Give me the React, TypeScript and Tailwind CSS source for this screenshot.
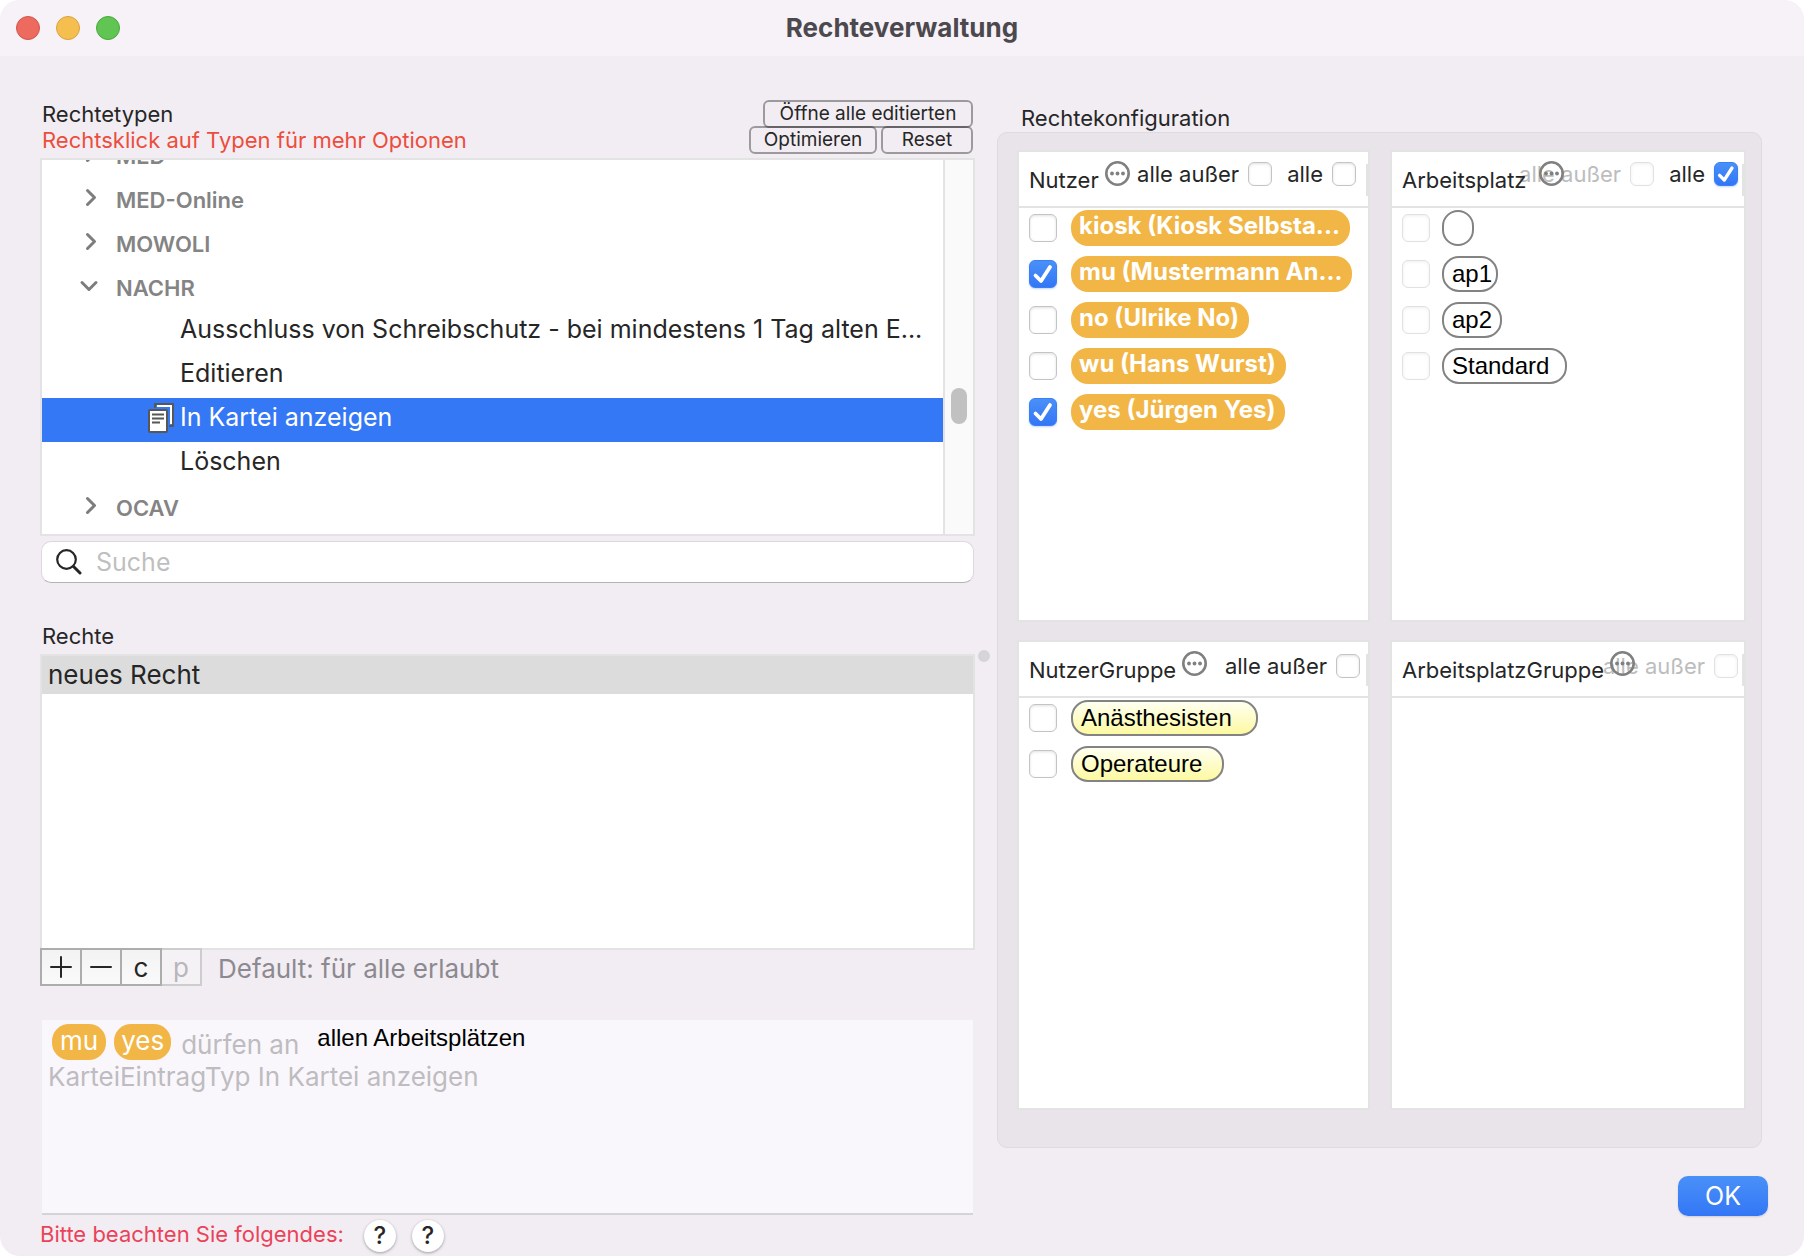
import React from 'react';

type Entry = { label: string; checked?: boolean; disabled?: boolean; pad?: string };

type Panel = {
  title: string;
  titleClass: string;
  options: Entry[];
  optionsClass: string;
  entries: Entry[];
  rowClass: string;
  pillClass: string;
};

const orangePill =
  'bg-[#f2b646] font-bold text-white text-[24px] leading-[32px] pb-1 pl-2 pr-[10px]';
const whitePill =
  "border-2 border-[#838383] bg-white text-black text-[24px] leading-[32px] pl-2 font-['Liberation_Sans',Arial,sans-serif]";
const yellowPill =
  "border-2 border-[#838383] bg-linear-to-b from-[#fffff0] to-[#fdf9a0] text-black text-[24px] leading-[32px] pl-2 font-['Liberation_Sans',Arial,sans-serif]";

const tree = [
  { label: 'MED', group: true },
  { label: 'MED-Online', group: true },
  { label: 'MOWOLI', group: true },
  { label: 'NACHR', group: true, open: true },
  { label: 'Ausschluss von Schreibschutz - bei mindestens 1 Tag alten E...' },
  { label: 'Editieren' },
  { label: 'In Kartei anzeigen', selected: true },
  { label: 'Löschen' },
  { label: 'OCAV', group: true },
];

const panels: Panel[] = [
  {
    title: 'Nutzer',
    titleClass: 'gap-[6px]',
    options: [{ label: 'alle außer' }, { label: 'alle' }],
    optionsClass: 'pt-[10px] pr-3',
    entries: [
      { label: 'kiosk (Kiosk Selbsta...' },
      { label: 'mu (Mustermann An...', checked: true },
      { label: 'no (Ulrike No)' },
      { label: 'wu (Hans Wurst)' },
      { label: 'yes (Jürgen Yes)', checked: true },
    ],
    rowClass: 'gap-[14px]',
    pillClass: orangePill,
  },
  {
    title: 'Arbeitsplatz',
    titleClass: 'gap-3',
    options: [
      { label: 'alle außer', disabled: true },
      { label: 'alle', checked: true },
    ],
    optionsClass: 'pt-[10px] pr-[6px]',
    entries: [
      { label: '', disabled: true, pad: 'pr-2' },
      { label: 'ap1', disabled: true, pad: 'pr-1' },
      { label: 'ap2', disabled: true, pad: 'pr-2' },
      { label: 'Standard', disabled: true, pad: 'pr-4' },
    ],
    rowClass: 'gap-3',
    pillClass: whitePill,
  },
  {
    title: 'NutzerGruppe',
    titleClass: 'gap-[6px]',
    options: [{ label: 'alle außer' }],
    optionsClass: 'pt-3 pr-2',
    entries: [
      { label: 'Anästhesisten', pad: 'pr-6' },
      { label: 'Operateure', pad: 'pr-5' },
    ],
    rowClass: 'gap-[14px]',
    pillClass: yellowPill,
  },
  {
    title: 'ArbeitsplatzGruppe',
    titleClass: 'gap-[6px]',
    options: [{ label: 'alle außer', disabled: true }],
    optionsClass: 'pt-3 pr-[6px]',
    entries: [],
    rowClass: 'gap-3',
    pillClass: whitePill,
  },
];

const Checkbox = ({ entry, size }: { entry: Entry; size: string }) => (
  <span className={`grid shrink-0 ${size}`}>
    <input
      type="checkbox"
      defaultChecked={entry.checked}
      disabled={entry.disabled}
      aria-label={entry.label || 'leer'}
      className="peer [grid-area:1/1] size-full appearance-none rounded-md border border-[#c4c4c4] bg-white shadow-[inset_0_1px_3px_rgba(0,0,0,0.12)] checked:border-[#3b7ff7] checked:bg-linear-to-b checked:from-[#4a90f8] checked:to-[#3376f6] checked:shadow-[0_1px_2px_rgba(51,118,246,0.3)] disabled:opacity-50"
    />
    <svg
      viewBox="0 0 28 28"
      className="pointer-events-none invisible [grid-area:1/1] size-full peer-checked:visible"
      fill="none"
      stroke="white"
      strokeWidth="3.8"
      strokeLinecap="round"
      strokeLinejoin="round"
    >
      <path d="M6.5 15.5 L12 21 L21 7" />
    </svg>
  </span>
);

const Chevron = ({ open }: { open?: boolean }) => (
  <svg
    viewBox="0 0 20 20"
    className="size-5"
    fill="none"
    stroke="#7d7d7d"
    strokeWidth="3"
    strokeLinecap="round"
    strokeLinejoin="round"
  >
    <path d={open ? 'M3 6.5 L10 13.5 L17 6.5' : 'M8.5 2.5 L15.5 9.5 L8.5 16.5'} />
  </svg>
);

const PagesIcon = () => (
  <svg viewBox="0 0 26 30" className="h-[30px] w-[26px]" fill="white" stroke="#575757" strokeWidth="2">
    <path d="M7 5 V1 H25 V23 H21" fill="none" />
    <path d="M9 3 H23 V21" fill="none" stroke="white" />
    <rect x="1" y="7" width="18" height="22" rx="1" />
    <path d="M4 11.5 H16 M4 15.5 H16 M4 19.5 H12" />
  </svg>
);

const MoreIcon = () => (
  <svg viewBox="0 0 25 25" className="size-[25px]" fill="none">
    <circle cx="12.5" cy="12.5" r="11.2" stroke="#808080" strokeWidth="2.6" />
    <g fill="#808080">
      <circle cx="7" cy="12.5" r="1.9" />
      <circle cx="12.5" cy="12.5" r="1.9" />
      <circle cx="18" cy="12.5" r="1.9" />
    </g>
  </svg>
);

const TreeList = () => (
  <div className="mt-1 flex h-[378px] border-2 border-[#e3e3e3] bg-white">
    <div className="min-w-0 flex-1 overflow-hidden">
      {/* scrolled down, the first row is partly out of view */}
      <ul className="-mt-[26px]">
        {tree.map((node) =>
          node.group ? (
            <li key={node.label} className="flex h-11 items-center pl-[37px]">
              <button type="button" aria-label={node.label} className="mb-1 mr-[17px]">
                <Chevron open={node.open} />
              </button>
              <span className="text-[22px] font-semibold text-[#848484]">{node.label}</span>
            </li>
          ) : (
            <li
              key={node.label}
              className={`flex h-11 items-center pb-1 ${
                node.selected ? 'bg-[#3478f6] text-white' : ''
              }`}
            >
              <span className="flex w-[138px] shrink-0 justify-end pr-[6px]">
                {node.selected && <PagesIcon />}
              </span>
              <span className="truncate text-[25px]">{node.label}</span>
            </li>
          )
        )}
      </ul>
    </div>
    <div className="w-[30px] border-l-2 border-[#e3e3e3] bg-[#fafafa] pl-[6px] pt-[228px]">
      <div className="h-9 w-4 rounded-full bg-[#c1c1c1]" />
    </div>
  </div>
);

const PanelBox = ({ panel }: { panel: Panel }) => (
  <section className="min-w-0 border-2 border-[#e3e3e3] bg-white">
    <header className="grid h-14 border-b-2 border-[#e3e3e3]">
      <div className={`[grid-area:1/1] flex items-start justify-end gap-[15px] ${panel.optionsClass}`}>
        {panel.options.map((option) => (
          <label
            key={option.label}
            className={`flex h-6 items-center gap-[9px] text-[22px] ${
              option.disabled ? 'text-[#bdbdbd]' : ''
            }`}
          >
            {option.label}
            <Checkbox entry={option} size="size-6" />
          </label>
        ))}
      </div>
      <div className={`[grid-area:1/1] flex items-start justify-self-start pl-[10px] ${panel.titleClass}`}>
        <h2 className="pt-[14px] text-[22px] leading-7">{panel.title}</h2>
        <button type="button" aria-label={`${panel.title} Optionen`} className="pt-[9px]">
          <MoreIcon />
        </button>
      </div>
      <div className="[grid-area:1/1] mt-3 h-8 w-0.5 justify-self-end bg-[#e3e3e3]" />
    </header>
    <ul className="flex flex-col gap-[10px] pl-[10px] pr-2 pt-0.5">
      {panel.entries.map((entry) => (
        <li key={entry.label}>
          <label className={`flex items-center ${panel.rowClass}`}>
            <Checkbox entry={entry} size="size-7" />
            <span className={`h-9 min-w-8 truncate rounded-[17px] ${panel.pillClass} ${entry.pad ?? ''}`}>
              {entry.label}
            </span>
          </label>
        </li>
      ))}
    </ul>
  </section>
);

const smallButton = 'h-7 rounded-md border-2 border-black/35 text-[19px] leading-6';
const toolButton =
  'flex h-[38px] w-[42px] items-center justify-center border-2 border-[#adadad] bg-linear-to-b from-[#f3f3f3] to-[#fafafa] text-[26px]';
const helpButton =
  'size-8 rounded-full bg-white text-[24px] font-medium leading-8 shadow-[0_1px_3px_rgba(0,0,0,0.35)]';

const App = () => {
  return (
    <div className="min-h-screen overflow-hidden rounded-[20px] bg-[#f2edf3] font-[Inter,sans-serif] text-[#262626]">
      <div className="grid h-14 grid-cols-[1fr_auto_1fr] items-center bg-[#f6f2f8] px-4">
        <div className="flex gap-4">
          <button type="button" aria-label="Schließen" className="size-6 rounded-full border border-[#d35549] bg-[#ec6a5e]" />
          <button type="button" aria-label="Minimieren" className="size-6 rounded-full border border-[#d9a13c] bg-[#f5bf4f]" />
          <button type="button" aria-label="Zoomen" className="size-6 rounded-full border border-[#4aa73c] bg-[#61c554]" />
        </div>
        <h1 className="text-[26px] font-bold leading-[54px] text-[#4b494d]">Rechteverwaltung</h1>
      </div>

      <main className="grid grid-cols-[minmax(0,935fr)_22px_minmax(0,771fr)] pl-10 pr-9">
        <div className="pt-11">
          <div className="flex h-[54px] justify-between">
            <div className="pl-0.5 pt-px text-[22px] leading-[26px]">
              <h2>Rechtetypen</h2>
              <p className="text-[#ec4d3d]">Rechtsklick auf Typen für mehr Optionen</p>
            </div>
            <div className="flex flex-col items-end pr-0.5">
              <button type="button" className={`w-[210px] ${smallButton}`}>
                Öffne alle editierten
              </button>
              <div className="-mt-0.5 flex gap-1">
                <button type="button" className={`w-32 ${smallButton}`}>
                  Optimieren
                </button>
                <button type="button" className={`w-[92px] ${smallButton}`}>
                  Reset
                </button>
              </div>
            </div>
          </div>

          <TreeList />

          <label className="mx-px mt-[5px] flex h-[42px] items-center rounded-[10px] border border-[#dcd8dd] border-b-[#b5b2b6] bg-white pl-[14px]">
            <svg viewBox="0 0 26 26" className="size-[26px]" fill="none" stroke="#262626" strokeLinecap="round">
              <circle cx="10.5" cy="10.5" r="9.3" strokeWidth="2.2" />
              <path d="M17.5 17.5 L24 24" strokeWidth="3" />
            </svg>
            <input
              type="text"
              placeholder="Suche"
              aria-label="Suche"
              className="ml-[14px] min-w-0 flex-1 bg-transparent pt-0.5 text-[25px] outline-none placeholder:text-[#bfbfbf]"
            />
          </label>

          <h2 className="mt-10 pl-0.5 text-[22px] leading-[26px]">Rechte</h2>
          <ul className="mt-[5px] h-[296px] border-2 border-[#e3e3e3] bg-white">
            <li className="h-[38px] bg-[#dcdcdc] pl-[6px] text-[26px] leading-[38px]">neues Recht</li>
          </ul>
          <div className="-mt-0.5 flex h-[38px] items-center">
            <button type="button" aria-label="Hinzufügen" className={toolButton}>
              <svg viewBox="0 0 22 22" className="size-[22px]" stroke="#262626" strokeWidth="2" strokeLinecap="round">
                <path d="M1 11 H21 M11 1 V21" />
              </svg>
            </button>
            <button type="button" aria-label="Entfernen" className={`-ml-0.5 ${toolButton}`}>
              <svg viewBox="0 0 22 22" className="size-[22px]" stroke="#262626" strokeWidth="2" strokeLinecap="round">
                <path d="M1 11 H21" />
              </svg>
            </button>
            <button type="button" className={`-ml-0.5 ${toolButton}`}>
              c
            </button>
            <button type="button" disabled className="flex h-[38px] w-10 items-center justify-center border-2 border-l-0 border-[#cfccd0] bg-[#f5f2f6] text-[26px] text-[#b8b6b9]">
              p
            </button>
            <p className="pl-4 pt-1 text-[26px] leading-[34px] text-[#8c8a90]">Default: für alle erlaubt</p>
          </div>

          <div className="mx-0.5 mt-[34px] h-[195px] border-b-2 border-[#d6d3d8] bg-[#f9f7fb] pl-[6px] pt-1 text-[26px] text-[#bebcc0]">
            <div className="flex h-9 pl-1">
              <span className="rounded-[17px] bg-[#f2b646] px-2 leading-[34px] text-white">mu</span>
              <span className="ml-2 rounded-[17px] bg-[#f2b646] px-[7px] leading-[34px] text-white">yes</span>
              <span className="ml-[10px] leading-[42px]">dürfen an</span>
              <span className="ml-[18px] font-['Liberation_Sans',Arial,sans-serif] text-[24px] leading-7 text-black">
                allen Arbeitsplätzen
              </span>
            </div>
            <p className="leading-[34px]">KarteiEintragTyp In Kartei anzeigen</p>
          </div>

          <div className="mt-[5px] flex gap-4">
            <p className="pr-1 text-[22px] leading-7 text-[#ea4359]">Bitte beachten Sie folgendes:</p>
            <button type="button" className={helpButton}>
              ?
            </button>
            <button type="button" className={helpButton}>
              ?
            </button>
          </div>
        </div>

        {/* splitter handle */}
        <div className="pl-[3px] pt-[594px]">
          <div className="size-3 rounded-full bg-[#d6d4d8]" />
        </div>

        <div className="flex flex-col pt-[49px]">
          <h2 className="pl-6 text-[22px] leading-[27px]">Rechtekonfiguration</h2>
          <div className="mr-[6px] grid grid-cols-[minmax(0,353fr)_minmax(0,356fr)] grid-rows-[472px_470px] gap-x-5 gap-y-[18px] rounded-[10px] border border-[#dfdae0] bg-[#e9e4ea] pb-[37px] pl-[19px] pr-[15px] pt-[17px]">
            {panels.map((panel) => (
              <PanelBox key={panel.title} panel={panel} />
            ))}
          </div>
          <button
            type="button"
            className="mt-7 h-10 w-[90px] self-end rounded-[10px] bg-linear-to-b from-[#4a90f8] to-[#3376f6] text-[25px] leading-[38px] text-white shadow-[0_1px_2px_rgba(0,0,0,0.15)]"
          >
            OK
          </button>
        </div>
      </main>
    </div>
  );
};

export default App;
